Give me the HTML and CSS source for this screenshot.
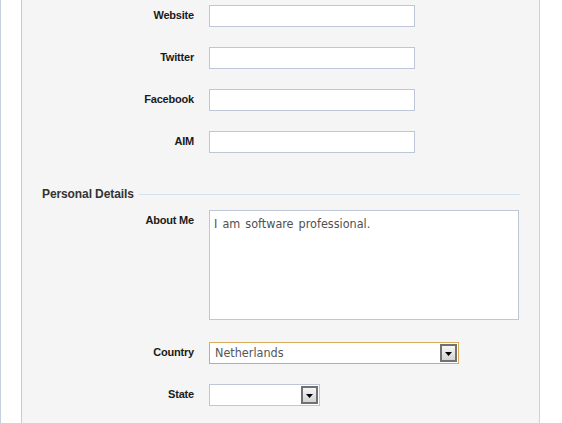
FILE: index.html
```html
<!DOCTYPE html>
<html lang="en">
<head>
<meta charset="utf-8">
<title>Profile</title>
<link rel="stylesheet" href="styles.css">
</head>
<body>
<div class="page">
  <div class="gutter"></div>
  <div class="panel">
    <div class="row first">
      <label class="label">Website</label>
      <input class="text" type="text">
    </div>
    <div class="row">
      <label class="label">Twitter</label>
      <input class="text" type="text">
    </div>
    <div class="row">
      <label class="label">Facebook</label>
      <input class="text" type="text">
    </div>
    <div class="row">
      <label class="label">AIM</label>
      <input class="text" type="text">
    </div>

    <div class="section-head">
      <span class="section-title">Personal Details</span>
      <span class="section-rule"></span>
    </div>

    <div class="row about">
      <label class="label">About Me</label>
      <textarea class="area">I am software professional.</textarea>
    </div>
    <div class="row country">
      <label class="label">Country</label>
      <div class="select select-country focused">
        <span class="select-value">Netherlands</span>
        <span class="select-btn"><svg width="7" height="4" viewBox="0 0 7 4"><polygon points="0,0 7,0 3.5,4" fill="#000"/></svg></span>
      </div>
    </div>
    <div class="row">
      <label class="label">State</label>
      <div class="select select-state">
        <span class="select-value"></span>
        <span class="select-btn"><svg width="7" height="4" viewBox="0 0 7 4"><polygon points="0,0 7,0 3.5,4" fill="#000"/></svg></span>
      </div>
    </div>
  </div>
</div>
</body>
</html>
```

FILE: styles.css
```css
html, body {
  margin: 0;
  padding: 0;
  background: #ffffff;
}

.page {
  display: flex;
  height: 423px;
  overflow: hidden;
}

.gutter {
  width: 20px;
  border-left: 1px solid #c6d1de;
  background: #ffffff;
  flex: none;
}

.panel {
  width: 519px;
  box-sizing: border-box;
  flex: none;
  background: #f5f5f5;
  border-left: 1px solid #cbcbcb;
  border-right: 1px solid #d2d2d2;
  padding-top: 5px;
}

.row {
  display: grid;
  grid-template-columns: 172px auto;
  column-gap: 15px;
  align-items: start;
  margin-top: 20px;
}

.row.first {
  margin-top: 0;
}

.label {
  text-align: right;
  padding-top: 3px;
  font: bold 11px/14px "Liberation Sans", Arial, sans-serif;
  letter-spacing: -0.2px;
  color: #1a1a1a;
}

.text {
  display: block;
  width: 206px;
  height: 22px;
  box-sizing: border-box;
  margin: 0;
  padding: 0 4px;
  border: 1px solid #bdc7d8;
  background: #ffffff;
  font: 12px "DejaVu Sans Condensed", "DejaVu Sans", sans-serif;
  color: #555555;
  outline: none;
}

.section-head {
  display: flex;
  align-items: center;
  gap: 5px;
  height: 16px;
  margin: 33px 19px 0 20px;
}

.section-title {
  font: bold 12px/16px "Liberation Sans", Arial, sans-serif;
  letter-spacing: -0.1px;
  color: #333333;
  white-space: nowrap;
}

.section-rule {
  flex: 1;
  height: 1px;
  background: #d5e3ee;
}

.row.about {
  margin-top: 8px;
}

.area {
  display: block;
  width: 310px;
  height: 110px;
  box-sizing: border-box;
  margin: 0;
  padding: 5px 4px;
  border: 1px solid #bdc7d8;
  background: #ffffff;
  font: 12.5px/16px "DejaVu Sans Condensed", "DejaVu Sans", sans-serif;
  word-spacing: 1.5px;
  color: #505050;
  resize: none;
  overflow: hidden;
  outline: none;
}

.row.country {
  margin-top: 22px;
}

.select {
  display: flex;
  align-items: center;
  height: 22px;
  box-sizing: border-box;
  border: 1px solid #bdc7d8;
  background: #ffffff;
}

.select.focused {
  border-color: #d7aa5c;
}

.select-country {
  width: 250px;
}

.select-state {
  width: 111px;
}

.select-value {
  flex: 1;
  padding-left: 5px;
  font: 12.5px/20px "DejaVu Sans Condensed", "DejaVu Sans", sans-serif;
  color: #555555;
  white-space: nowrap;
  overflow: hidden;
}

.select-btn {
  flex: none;
  width: 17px;
  height: 18px;
  box-sizing: border-box;
  margin-right: 1px;
  border: 2px solid #717171;
  background: linear-gradient(#f6f6f6, #d3d3d3);
  display: flex;
  align-items: center;
  justify-content: center;
}

.select-btn svg {
  display: block;
  margin-top: 1px;
}
```
